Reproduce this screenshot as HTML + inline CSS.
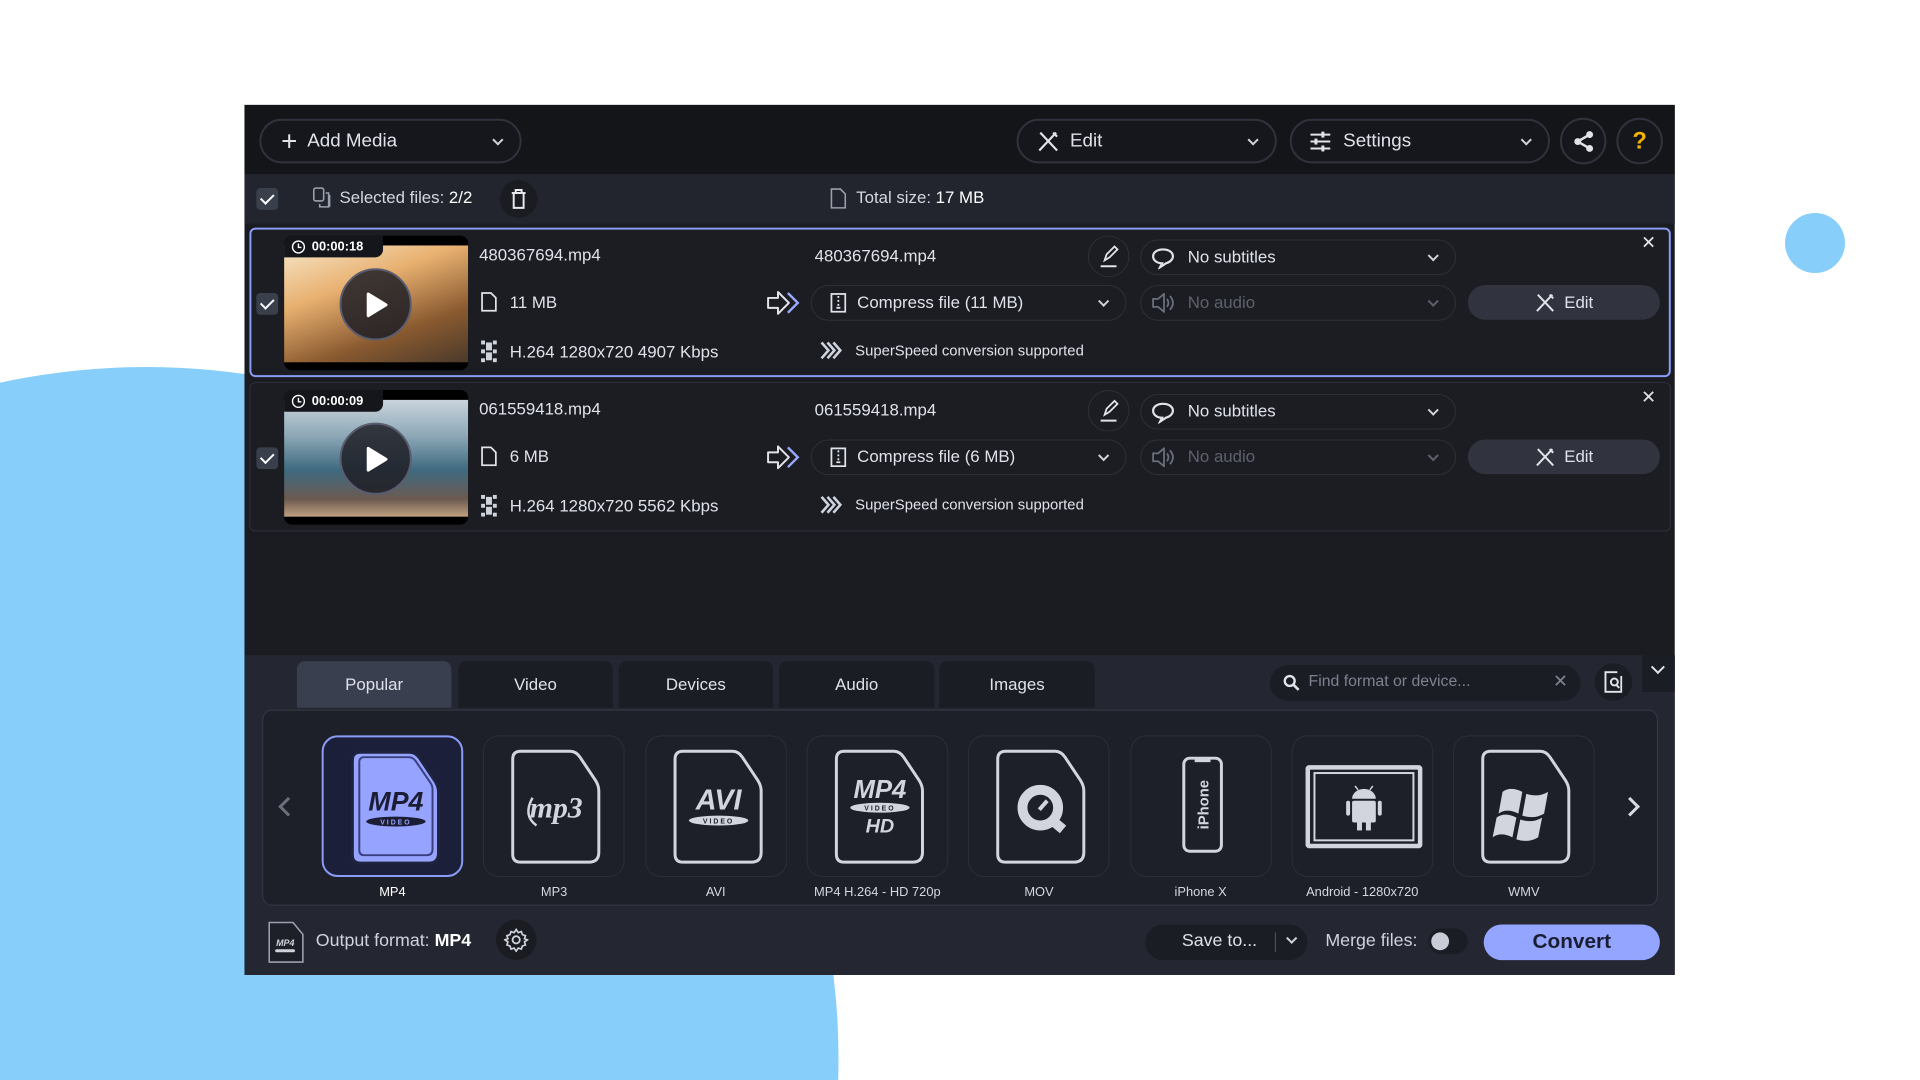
<!DOCTYPE html>
<html style="overflow:hidden;width:1920px;height:1080px"><head><meta charset="utf-8">
<style>
*{box-sizing:border-box;margin:0;padding:0}
body{width:1920px;height:1080px;background:#fff;position:relative;overflow:hidden;font-family:"Liberation Sans","DejaVu Sans",sans-serif;color:#e6e8ef}
#root{position:absolute;left:0;top:0;width:1920px;height:1080px;overflow:hidden}
#sc{position:absolute;left:0;top:0;width:1920px;height:1080px;transform:scale(0.9898);transform-origin:0 0}
.a{position:absolute}
.win{left:247px;top:106px;width:1445px;height:879px;background:#1a1c22}
.pill{position:absolute;border:2px solid #30333d;border-radius:24px;background:#16171c;display:flex;align-items:center;font-size:19px;color:#dfe2ea}
.dd{position:absolute;border:1.5px solid #2d3039;border-radius:20px;display:flex;align-items:center;font-size:17px;color:#dfe2ea;background:#1b1d23}
.chev{position:absolute;right:18px;top:50%;width:8px;height:8px;border-right:2px solid #cfd3dc;border-bottom:2px solid #cfd3dc;transform:translateY(-70%) rotate(45deg)}
.t{position:absolute;white-space:nowrap}
.chk{position:absolute;width:22px;height:22px;border-radius:4px;background:#3a3f4c}
.chk:after{content:"";position:absolute;left:7px;top:3px;width:6px;height:11px;border-right:2.5px solid #fff;border-bottom:2.5px solid #fff;transform:rotate(45deg)}
.card{position:absolute;top:743px;width:143px;height:143px;border:1.5px solid #2b2e38;border-radius:16px;background:#1e2029}
.lab{position:absolute;top:893px;width:163px;text-align:center;font-size:13px;color:#d4d7df}
.tab{position:absolute;top:668px;height:47px;background:#1b1d24;border-radius:8px 8px 0 0;font-size:17px;color:#dfe2ea;display:flex;align-items:center;justify-content:center}
</style></head><body><div id="root">
<svg class="a" style="left:0;top:0" width="1920" height="1080" viewBox="0 0 1920 1080"><circle cx="146.5" cy="1059" r="692" fill="#87cefa"/><circle cx="1815" cy="243" r="30" fill="#87cefa"/></svg>
<div id="sc">
<div class="a win"></div>
<div class="a" style="left:247px;top:106px;width:1445px;height:70px;background:#141519"></div>
<div class="pill" style="left:262px;top:120px;width:265px;height:45px;padding-left:20px"><span style="font-size:28px;font-weight:300;margin-right:10px;line-height:1">+</span>Add Media<span class="chev"></span></div>
<div class="pill" style="left:1027px;top:120px;width:263px;height:45px;padding-left:18px">
<svg width="24" height="24" viewBox="0 0 24 24" style="margin-right:10px"><path d="M4 3l17 18M20 3L3 21M17 3l4 4" stroke="#e0e3ea" stroke-width="2.2" fill="none"/></svg>Edit<span class="chev"></span></div>
<div class="pill" style="left:1303px;top:120px;width:263px;height:45px;padding-left:18px">
<svg width="22" height="22" viewBox="0 0 22 22" style="margin-right:12px"><path d="M1 4h20M1 11h20M1 18h20" stroke="#e0e3ea" stroke-width="2"/><rect x="12" y="1" width="3" height="6" fill="#e0e3ea"/><rect x="5" y="8" width="3" height="6" fill="#e0e3ea"/><rect x="12" y="15" width="3" height="6" fill="#e0e3ea"/></svg>Settings<span class="chev"></span></div>
<div class="pill" style="left:1576px;top:119px;width:47px;height:47px;justify-content:center"><svg width="22" height="22" viewBox="0 0 22 22"><circle cx="17" cy="4" r="3.5" fill="#e0e3ea"/><circle cx="5" cy="11" r="3.5" fill="#e0e3ea"/><circle cx="17" cy="18" r="3.5" fill="#e0e3ea"/><path d="M17 4L5 11l12 7" stroke="#e0e3ea" stroke-width="2.5" fill="none"/></svg></div>
<div class="pill" style="left:1633px;top:119px;width:47px;height:47px;justify-content:center;color:#f5b400;font-weight:bold;font-size:24px">?</div>

<div class="a" style="left:247px;top:176px;width:1445px;height:50px;background:#22252e"></div>
<div class="chk" style="left:259px;top:190px"></div>
<svg class="a" style="left:316px;top:189px" width="20" height="22" viewBox="0 0 20 22"><rect x="1" y="1" width="10" height="13" rx="2" stroke="#9aa0ad" stroke-width="1.6" fill="none"/><path d="M7 17v3h9V6h-3M17 8v12" stroke="#9aa0ad" stroke-width="1.6" fill="none"/></svg>
<div class="t" style="left:343px;top:190px;font-size:17px;color:#d4d7df">Selected files: <span style="color:#fff">2/2</span></div>
<div class="a" style="left:505px;top:182px;width:38px;height:38px;border-radius:50%;background:#1a1c22"></div>
<svg class="a" style="left:515px;top:190px" width="18" height="22" viewBox="0 0 18 22"><path d="M2 5h14M6 5V2h6v3M4 5v15h10V5" stroke="#e6e8ef" stroke-width="2" fill="none"/></svg>
<svg class="a" style="left:839px;top:190px" width="16" height="21" viewBox="0 0 16 21"><path d="M1 1h9l5 5v14H1z" stroke="#9aa0ad" stroke-width="1.6" fill="none"/></svg>
<div class="t" style="left:865px;top:190px;font-size:17px;color:#d4d7df">Total size: <span style="color:#fff">17 MB</span></div>

<div id="items"></div>

<div class="a" style="left:247px;top:662px;width:1445px;height:323px;background:#242731"></div>
<div class="tab" style="left:300px;width:156px;background:#3a3f50">Popular</div>
<div class="tab" style="left:463px;width:156px">Video</div>
<div class="tab" style="left:625px;width:156px">Devices</div>
<div class="tab" style="left:787px;width:157px">Audio</div>
<div class="tab" style="left:949px;width:157px">Images</div>
<div class="a" style="left:1283px;top:672px;width:314px;height:36px;border-radius:18px;background:#1b1d24"></div>
<svg class="a" style="left:1296px;top:681px" width="18" height="18" viewBox="0 0 18 18"><circle cx="7" cy="7" r="5" stroke="#e0e3ea" stroke-width="2.4" fill="none"/><path d="M11 11l5 5" stroke="#e0e3ea" stroke-width="2.6"/></svg>
<div class="t" style="left:1322px;top:680px;font-size:16px;color:#7d8290">Find format or device...</div>
<div class="t" style="left:1569px;top:678px;font-size:18px;color:#7d8290">✕</div>
<div class="a" style="left:1611px;top:670px;width:38px;height:38px;border-radius:50%;background:#1b1d24"></div>
<svg class="a" style="left:1621px;top:678px" width="18" height="22" viewBox="0 0 18 22"><path d="M13 1H1v20h16V5" stroke="#e0e3ea" stroke-width="2" fill="none"/><circle cx="10" cy="11" r="3.5" stroke="#e0e3ea" stroke-width="2" fill="none"/><path d="M12 14l3 3" stroke="#e0e3ea" stroke-width="2"/></svg>
<div class="a" style="left:1659px;top:662px;width:33px;height:37px;background:#1b1d24"></div>
<div class="a" style="left:1670px;top:669px;width:10px;height:10px;border-right:2px solid #e0e3ea;border-bottom:2px solid #e0e3ea;transform:rotate(45deg)"></div>

<div class="a" style="left:265px;top:717px;width:1410px;height:198px;border:1.5px solid #363a46;border-radius:10px;background:#1e2029"></div>
<div class="a" style="left:284px;top:808px;width:14px;height:14px;border-left:3px solid #6a6f7c;border-bottom:3px solid #6a6f7c;transform:rotate(45deg)"></div>
<div class="a" style="left:1640px;top:808px;width:14px;height:14px;border-right:3px solid #d8dbe3;border-top:3px solid #d8dbe3;transform:rotate(45deg)"></div>
<div id="cards"></div>

<svg class="a" style="left:270px;top:930px" width="38" height="44" viewBox="0 0 38 44"><path d="M2 2h24l10 12v28H2z" stroke="#9aa0ad" stroke-width="1.6" fill="#1e2029"/><text x="9" y="26" font-size="9" font-style="italic" font-weight="bold" fill="#cfd3dc" font-family="Liberation Sans">MP4</text><rect x="8" y="29" width="20" height="3" rx="1.5" fill="#cfd3dc"/></svg>
<div class="t" style="left:319px;top:940px;font-size:18px;color:#cfd3dc">Output format: <b style="color:#fff">MP4</b></div>
<div class="a" style="left:501px;top:929px;width:41px;height:41px;border-radius:50%;background:#1a1c22"></div>
<svg class="a" style="left:509px;top:937px" width="25" height="25" viewBox="0 0 24 24"><circle cx="12" cy="12" r="3.5" stroke="#cfd3dc" stroke-width="1.8" fill="none"/><path d="M12 2l2 3 3-1 1 3 3 1-1 3 3 1-3 2 1 3-3 1-1 3-3-1-2 3-2-3-3 1-1-3-3-1 1-3-3-2 3-1-1-3 3-1 1-3 3 1z" stroke="#cfd3dc" stroke-width="1.6" fill="none"/></svg>
<div class="a" style="left:1157px;top:934px;width:164px;height:36px;border-radius:18px;background:#1b1d24"></div>
<div class="t" style="left:1194px;top:940px;font-size:18px;color:#dfe2ea">Save to...</div>
<div class="a" style="left:1288px;top:942px;width:1px;height:20px;background:#555a66"></div>
<div class="a" style="left:1301px;top:944px;width:8px;height:8px;border-right:2px solid #cfd3dc;border-bottom:2px solid #cfd3dc;transform:rotate(45deg)"></div>
<div class="t" style="left:1339px;top:940px;font-size:18px;color:#cfd3dc">Merge files:</div>
<div class="a" style="left:1443px;top:938px;width:40px;height:26px;border-radius:13px;background:#1b1d24"></div>
<div class="a" style="left:1446px;top:942px;width:18px;height:18px;border-radius:50%;background:#c9ccd6"></div>
<div class="a" style="left:1499px;top:934px;width:178px;height:36px;border-radius:18px;background:#94a5ff;color:#1a1d33;font-weight:bold;font-size:21px;display:flex;align-items:center;justify-content:center">Convert</div>
</div></div>
<script>
var items=[{y:230,tc:"00:00:18",name:"480367694.mp4",size:"11 MB",comp:"Compress file (11 MB)",codec:"H.264 1280x720 4907 Kbps",sel:1,img:"linear-gradient(160deg,#f7e6c8 0%,#e8b070 35%,#8a5a30 70%,#4a3a2a 100%)"},
{y:386,tc:"00:00:09",name:"061559418.mp4",size:"6 MB",comp:"Compress file (6 MB)",codec:"H.264 1280x720 5562 Kbps",sel:0,img:"linear-gradient(180deg,#c9d4dc 0%,#8fa9b8 30%,#3f6a80 60%,#6b5a50 85%,#c0a080 100%)"}];
var h="";
items.forEach(function(it){var y=it.y;
h+='<div class="a" style="left:252px;top:'+y+'px;width:1436px;height:151px;border:'+(it.sel?'2.5px solid #8b9cf6':'1.5px solid #2f323c')+';border-radius:6px;background:#1b1d23"></div>';
h+='<div class="chk" style="left:259px;top:'+(y+66)+'px"></div>';
h+='<div class="a" style="left:287px;top:'+(y+8)+'px;width:186px;height:136px;background:#000;border-radius:8px;overflow:hidden"><div style="position:absolute;left:0;top:10px;width:186px;height:118px;background:'+it.img+'"></div></div>';
h+='<div class="a" style="left:287px;top:'+(y+8)+'px;width:100px;height:22px;background:#15161b;border-radius:8px 0 8px 0;font-size:13px;font-weight:bold;color:#fff;padding:3px 0 0 28px">'+it.tc+'</div>';
h+='<svg class="a" style="left:294px;top:'+(y+12)+'px" width="15" height="15" viewBox="0 0 15 15"><circle cx="7.5" cy="7.5" r="6" stroke="#fff" stroke-width="1.4" fill="none"/><path d="M7.5 4v4h3" stroke="#fff" stroke-width="1.4" fill="none"/></svg>';
h+='<div class="a" style="left:343px;top:'+(y+41)+'px;width:73px;height:73px;border-radius:50%;background:rgba(30,30,38,.85);border:2px solid #5a5d70"></div>';
h+='<svg class="a" style="left:369px;top:'+(y+64)+'px" width="24" height="28" viewBox="0 0 24 28"><path d="M3 3l18 11L3 25z" fill="#fff" stroke="#fff" stroke-width="3" stroke-linejoin="round"/></svg>';
h+='<div class="t" style="left:484px;top:'+(y+18)+'px;font-size:17px;color:#dfe2ea">'+it.name+'</div>';
h+='<svg class="a" style="left:486px;top:'+(y+65)+'px" width="16" height="20" viewBox="0 0 16 20"><path d="M1 1h9l5 5v13H1z" stroke="#e0e3ea" stroke-width="1.8" fill="none"/></svg>';
h+='<div class="t" style="left:515px;top:'+(y+66)+'px;font-size:17px;color:#dfe2ea">'+it.size+'</div>';
h+='<svg class="a" style="left:486px;top:'+(y+114)+'px" width="16" height="22" viewBox="0 0 16 22"><rect x="0" y="0" width="4" height="4" fill="#cfd3dc"/><rect x="0" y="9" width="4" height="4" fill="#cfd3dc"/><rect x="0" y="18" width="4" height="4" fill="#cfd3dc"/><rect x="12" y="0" width="4" height="4" fill="#cfd3dc"/><rect x="12" y="9" width="4" height="4" fill="#cfd3dc"/><rect x="12" y="18" width="4" height="4" fill="#cfd3dc"/><rect x="5" y="2" width="6" height="8" fill="#cfd3dc"/><rect x="5" y="12" width="6" height="8" fill="#cfd3dc"/></svg>';
h+='<div class="t" style="left:515px;top:'+(y+116)+'px;font-size:17px;color:#dfe2ea">'+it.codec+'</div>';
h+='<div class="t" style="left:823px;top:'+(y+19)+'px;font-size:17px;color:#dfe2ea">'+it.name+'</div>';
h+='<svg class="a" style="left:774px;top:'+(y+63)+'px" width="34" height="26" viewBox="0 0 34 26"><path d="M2 8h10V2l11 11-11 11v-6H2z" stroke="#e0e3ea" stroke-width="2" fill="none" stroke-linejoin="round"/><path d="M22 3l10 10-10 10" stroke="#9aa8ff" stroke-width="2.4" fill="none"/></svg>';
h+='<svg class="a" style="left:828px;top:'+(y+114)+'px" width="24" height="20" viewBox="0 0 24 20"><path d="M2 2l7 8-7 8M8 2l7 8-7 8M14 2l7 8-7 8" stroke="#cfd3dc" stroke-width="2.6" fill="none"/></svg>';
h+='<div class="t" style="left:864px;top:'+(y+116)+'px;font-size:15px;color:#dfe2ea">SuperSpeed conversion supported</div>';
h+='<div class="a" style="left:1099px;top:'+(y+8)+'px;width:42px;height:42px;border-radius:50%;border:1.5px solid #2d3039"></div>';
h+='<svg class="a" style="left:1110px;top:'+(y+17)+'px" width="20" height="24" viewBox="0 0 20 24"><path d="M6 16l2-6 8-8 3 3-8 8z" stroke="#e0e3ea" stroke-width="1.8" fill="none"/><path d="M2 22h16" stroke="#e0e3ea" stroke-width="2"/></svg>';
h+='<div class="dd" style="left:1152px;top:'+(y+12)+'px;width:319px;height:36px;padding-left:47px">No subtitles<span class="chev"></span></div>';
h+='<svg class="a" style="left:1163px;top:'+(y+20)+'px" width="24" height="22" viewBox="0 0 24 22"><path d="M12 2C6 2 2 5 2 9s4 7 9 7l-2 4 6-4c4-1 7-4 7-7 0-4-4-7-10-7z" stroke="#e0e3ea" stroke-width="2.2" fill="none"/></svg>';
h+='<div class="dd" style="left:819px;top:'+(y+58)+'px;width:319px;height:36px;padding-left:46px">'+it.comp+'<span class="chev"></span></div>';
h+='<svg class="a" style="left:839px;top:'+(y+66)+'px" width="16" height="20" viewBox="0 0 16 20"><rect x="1" y="1" width="14" height="18" stroke="#e0e3ea" stroke-width="1.8" fill="none"/><path d="M8 3v2M8 7v2M8 11v2M6 15h4" stroke="#e0e3ea" stroke-width="1.8"/></svg>';
h+='<div class="dd" style="left:1152px;top:'+(y+58)+'px;width:319px;height:36px;padding-left:47px;color:#5d616d">No audio<span class="chev" style="border-color:#5d616d"></span></div>';
h+='<svg class="a" style="left:1163px;top:'+(y+66)+'px" width="26" height="20" viewBox="0 0 26 20"><path d="M2 6h5l6-5v18l-6-5H2z" stroke="#6a6f7c" stroke-width="1.8" fill="none"/><path d="M16 6q3 4 0 8M19 3q6 7 0 14" stroke="#6a6f7c" stroke-width="1.8" fill="none"/></svg>';
h+='<div class="a" style="left:1483px;top:'+(y+58)+'px;width:194px;height:35px;border-radius:18px;background:#31343f;display:flex;align-items:center;justify-content:center;font-size:17px;color:#dfe2ea"><svg width="22" height="22" viewBox="0 0 24 24" style="margin-right:8px"><path d="M4 3l17 18M20 3L3 21M17 3l4 4" stroke="#e0e3ea" stroke-width="2.2" fill="none"/></svg>Edit</div>';
h+='<div class="t" style="left:1658px;top:'+(y+5)+'px;font-size:18px;color:#e0e3ea">✕</div>';
});
document.getElementById("items").innerHTML=h;

var doc=function(fill,stroke,inner){return '<svg class="a" style="left:27px;top:12px" width="92" height="118" viewBox="0 0 92 118"><path d="M10 3h50q6 0 10 6l16 24q3 5 3 10v62q0 10-10 10H10q-8 0-8-8V11q0-8 8-8z" fill="'+fill+'" stroke="'+stroke+'" stroke-width="3"/>'+inner+'</svg>';};
var W="#d2d5de";
var cards=[
["MP4",doc("#97a4ff","#1e2340",'<path d="M14 8h45q4 0 7 4l15 22q2 3 2 7v60q0 6-6 6H14q-5 0-5-5V13q0-5 5-5z" fill="none" stroke="#3a3f80" stroke-width="2"/><text x="46" y="62" text-anchor="middle" font-size="27" font-weight="bold" font-style="italic" fill="#1a1d33" font-family="Liberation Sans">MP4</text><ellipse cx="46" cy="73" rx="30" ry="5" fill="#1a1d33"/><text x="46" y="76" text-anchor="middle" font-size="7" fill="#97a4ff" font-weight="bold" font-family="Liberation Sans" letter-spacing="2">VIDEO</text>')],
["MP3",doc("#1e2029",W,'<text x="46" y="70" text-anchor="middle" font-size="30" font-weight="bold" font-style="italic" fill="'+W+'" font-family="Liberation Serif">mp3</text><path d="M22 50q-10 18 4 28" stroke="'+W+'" stroke-width="2.5" fill="none"/>')],
["AVI",doc("#1e2029",W,'<text x="46" y="62" text-anchor="middle" font-size="29" font-weight="bold" font-style="italic" fill="'+W+'" font-family="Liberation Sans">AVI</text><ellipse cx="46" cy="73" rx="30" ry="5" fill="'+W+'"/><text x="46" y="76" text-anchor="middle" font-size="7" fill="#1e2029" font-weight="bold" font-family="Liberation Sans" letter-spacing="2">VIDEO</text>')],
["MP4 H.264 - HD 720p",doc("#1e2029",W,'<text x="46" y="50" text-anchor="middle" font-size="26" font-weight="bold" font-style="italic" fill="'+W+'" font-family="Liberation Sans">MP4</text><ellipse cx="46" cy="60" rx="30" ry="5" fill="'+W+'"/><text x="46" y="63" text-anchor="middle" font-size="7" fill="#1e2029" font-weight="bold" font-family="Liberation Sans" letter-spacing="2">VIDEO</text><text x="46" y="85" text-anchor="middle" font-size="20" font-weight="bold" font-style="italic" fill="'+W+'" font-family="Liberation Sans">HD</text>')],
["MOV",doc("#1e2029",W,'<circle cx="45" cy="60" r="18" stroke="'+W+'" stroke-width="10" fill="none"/><path d="M56 72l12 10" stroke="'+W+'" stroke-width="10"/><path d="M44 62l8-9" stroke="'+W+'" stroke-width="4"/>')],
["iPhone X",'<svg class="a" style="left:44px;top:20px" width="56" height="100" viewBox="0 0 56 100"><rect x="9" y="2" width="38" height="94" rx="6" stroke="'+W+'" stroke-width="3" fill="none"/><rect x="20" y="2" width="16" height="4" fill="'+W+'"/><text transform="translate(34 49) rotate(-90)" text-anchor="middle" font-size="15" font-weight="bold" fill="'+W+'" font-family="Liberation Sans">iPhone</text></svg>'],
["Android - 1280x720",'<svg class="a" style="left:13px;top:29px" width="118" height="84" viewBox="0 0 118 84"><rect x="2" y="2" width="114" height="80" rx="3" stroke="'+W+'" stroke-width="5" fill="none"/><rect x="9" y="8" width="100" height="68" fill="#1e2029" stroke="'+W+'" stroke-width="2"/><path d="M47 34a12 10 0 0 1 24 0z" fill="'+W+'"/><rect x="47" y="36" width="24" height="22" rx="2" fill="'+W+'"/><rect x="41" y="36" width="4" height="15" rx="2" fill="'+W+'"/><rect x="73" y="36" width="4" height="15" rx="2" fill="'+W+'"/><rect x="52" y="56" width="5" height="10" fill="'+W+'"/><rect x="61" y="56" width="5" height="10" fill="'+W+'"/><path d="M50 21l3 4M68 21l-3 4" stroke="'+W+'" stroke-width="1.5"/></svg>'],
["WMV",doc("#1e2029",W,'<path d="M22 44q8-6 20 0l-4 22q-12-6-20 0z M46 46q12 4 22-2l-4 22q-10 6-22 2z M16 70q8-6 20 0l-4 20q-12-6-20 0z M40 72q12 4 22-2l-4 20q-10 6-22 2z" fill="'+W+'"/>')]];
var c="";
cards.forEach(function(k,i){var x=325+i*163.3;
var sel=i==0;
c+='<div class="card" style="left:'+x+'px;'+(sel?'border:2.5px solid #8b9cf6;background:#1b1f3a':'')+'">'+k[1]+'</div>';
c+='<div class="lab" style="left:'+(x-10)+'px;'+(sel?'color:#fff':'')+'">'+k[0]+'</div>';
});
document.getElementById("cards").innerHTML=c;
</script>
</body></html>
